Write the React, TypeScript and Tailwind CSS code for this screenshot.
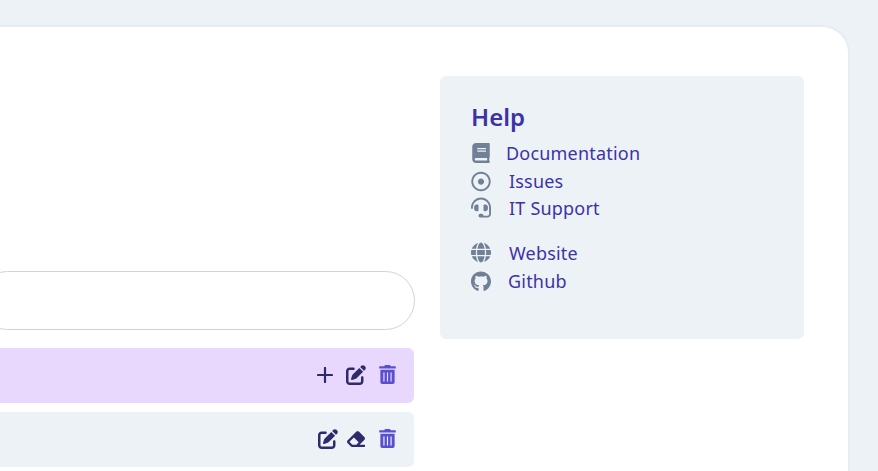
import React from "react";
import { FaBook, FaRegDotCircle, FaHeadset, FaGlobe, FaGithub, FaEraser, FaTrashAlt } from "react-icons/fa";
import { FaPenToSquare } from "react-icons/fa6";

const dark = "text-[#2f2a6b]";
const Trash = () => <FaTrashAlt className="text-[#5a4fcf] w-[17px] h-[19px] ml-[13px]" />;

function HelpLink({ icon, label, textClass }: { icon: React.ReactNode; label: string; textClass: string }) {
  return (
    <a className="flex items-center h-[27.5px] text-[18px] tracking-[0.2px] text-[#3c32a6]">
      <span className="w-5 flex justify-center text-[#718096]">{icon}</span>
      <span className={textClass}>{label}</span>
    </a>
  );
}

export default function App() {
  return (
    <div className="h-[471px] w-[878px] overflow-hidden bg-[#edf2f7] pt-[25px] pr-[28px] font-['Noto_Sans','Open_Sans',sans-serif]">
      <div className="ml-[-40px] h-[480px] rounded-[28px] border-2 border-[#e6ecf3] bg-white flex">
        <div className="flex-1 pt-[244px] pl-4 pr-[26px] flex flex-col">
          <div className="h-[59px] -mr-px rounded-full border border-[#cbd5e0] bg-white" />
          <div className="mt-[18px] h-[55px] rounded-[6px] bg-[#e9d8fd] flex items-center justify-end pr-[18px] pb-[2px]">
            <svg viewBox="0 0 16 16" className={`${dark} w-[16px] h-[16px] mr-[13px]`}>
              <path d="M8 1v14M1 8h14" stroke="currentColor" strokeWidth="2.2" strokeLinecap="round" fill="none" />
            </svg>
            <FaPenToSquare className={`${dark} w-[20px] h-[20px]`} />
            <Trash />
          </div>
          <div className="mt-[9px] h-[55px] rounded-[6px] bg-[#edf2f7] flex items-center justify-end pr-[18px] pb-[2px]">
            <FaPenToSquare className={`${dark} w-[20px] h-[20px] mr-[8px]`} />
            <FaEraser className={`${dark} w-[20px] h-[18px]`} />
            <Trash />
          </div>
        </div>
        <div className="mt-[49px] mr-[44px] w-[364px] h-[263px] rounded-[6px] bg-[#edf2f7] pl-[31px] pt-[24px]">
          <h2 className="text-[24px] leading-[33px] font-semibold text-[#3c32a6]">Help</h2>
          <div className="mt-[7px]">
            <HelpLink icon={<FaBook className="w-[18px] h-[20px] -mt-[2px]" />} label="Documentation" textClass="ml-[15px]" />
            <HelpLink icon={<FaRegDotCircle className="w-[21px] h-[21px]" />} label="Issues" textClass="ml-[18px]" />
            <HelpLink icon={<FaHeadset className="w-[21px] h-[21px] -mt-[2px]" />} label="IT Support" textClass="ml-[18px]" />
          </div>
          <div className="mt-[17.5px]">
            <HelpLink icon={<FaGlobe className="w-[21px] h-[21px] -mt-[2px]" />} label="Website" textClass="ml-[18px]" />
            <HelpLink icon={<FaGithub className="w-[21px] h-[21px]" />} label="Github" textClass="ml-[17px]" />
          </div>
        </div>
      </div>
    </div>
  );
}
